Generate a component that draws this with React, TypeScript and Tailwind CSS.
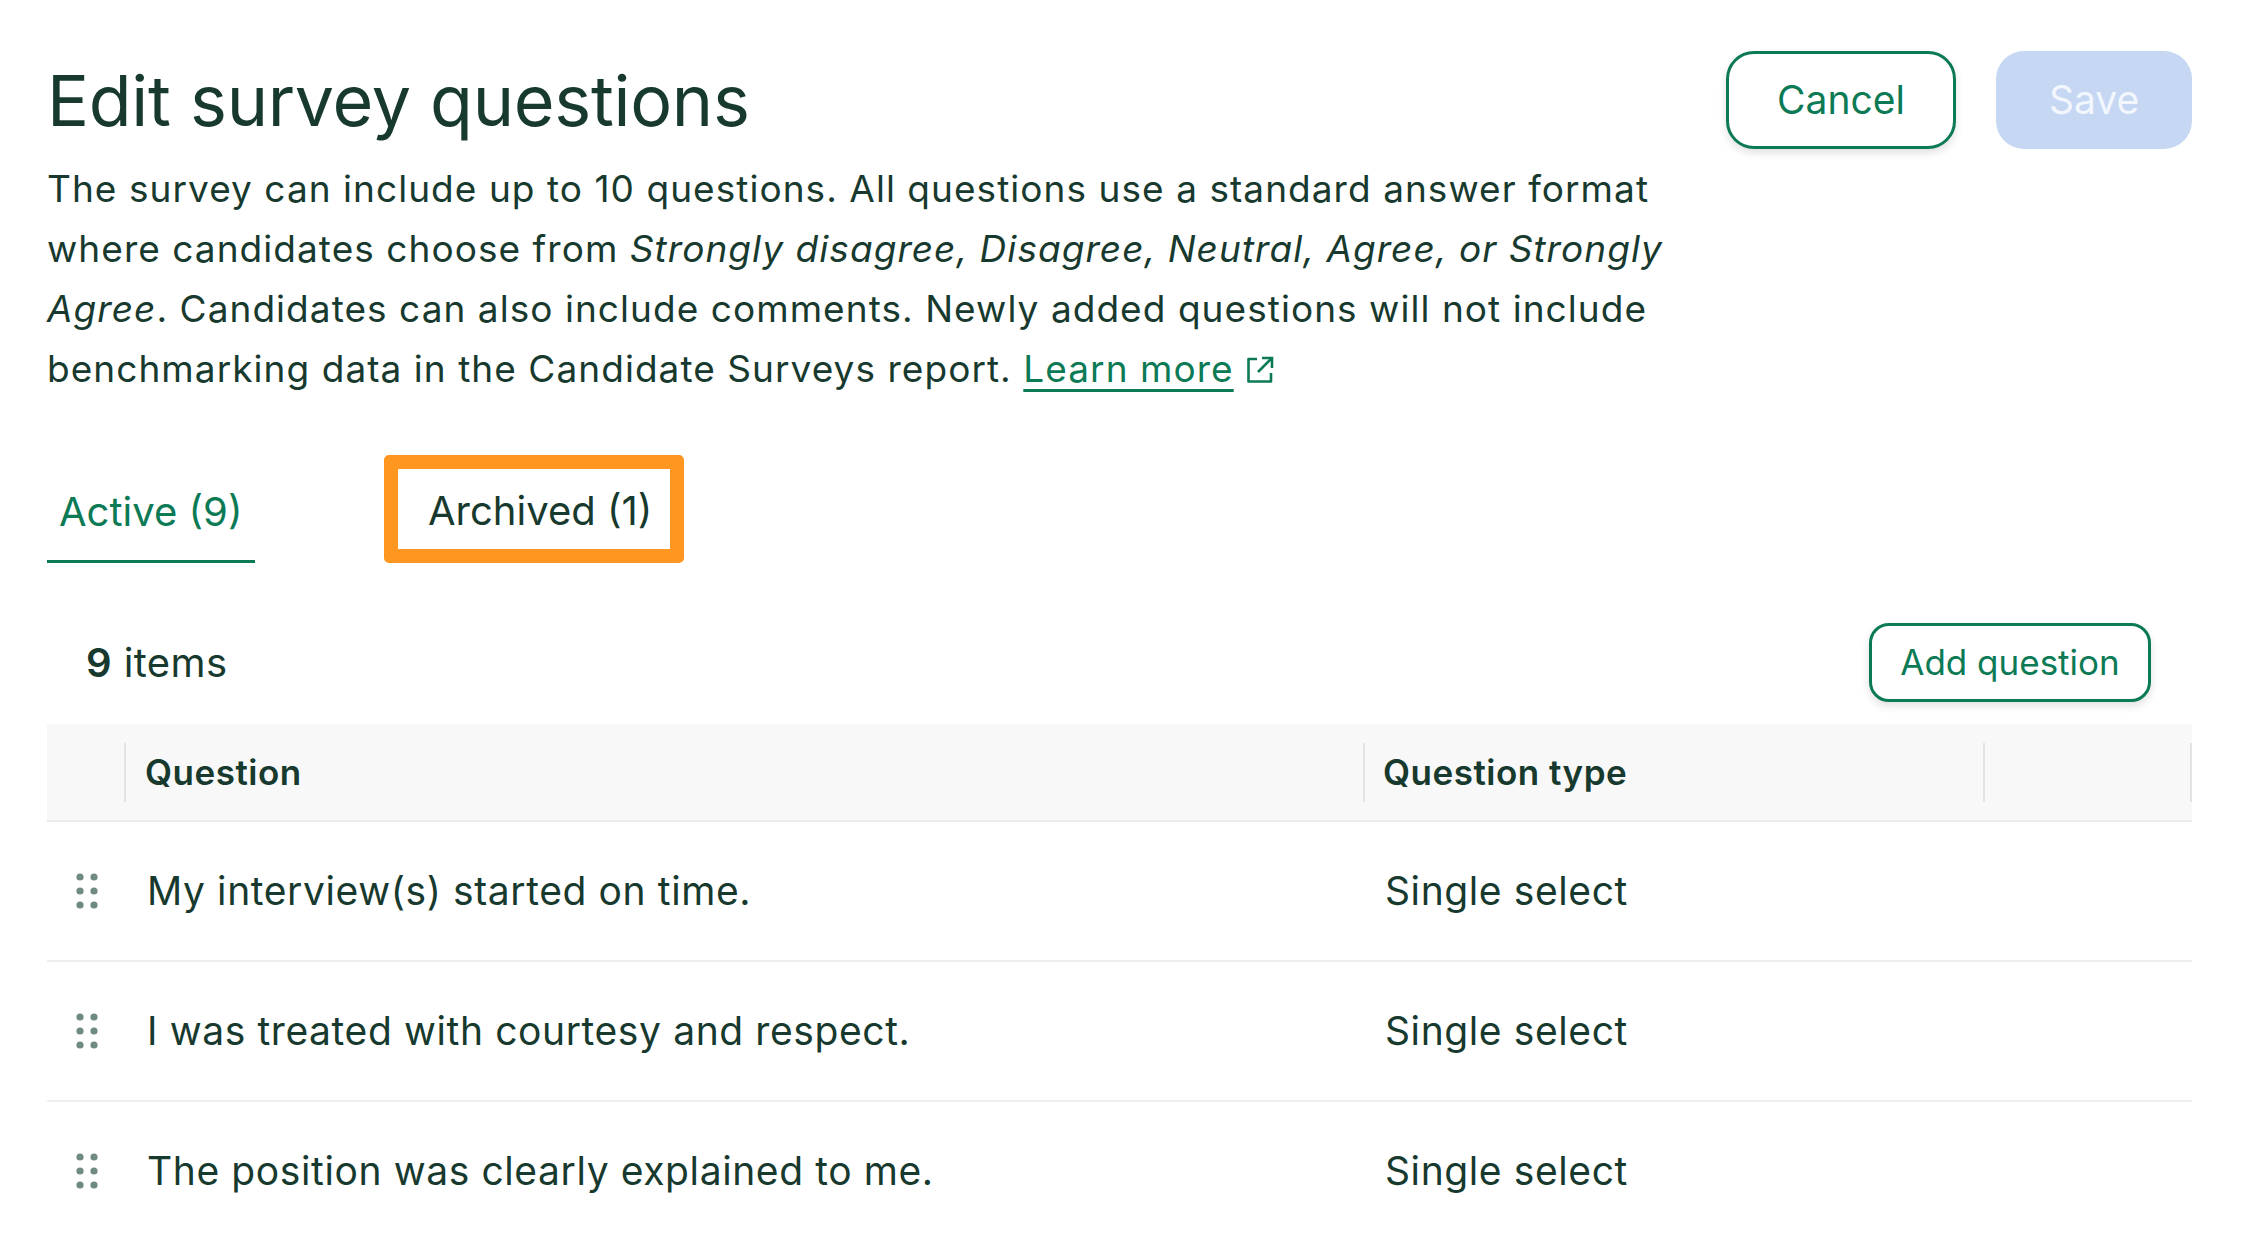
import React from "react";

const rows = [
  "My interview(s) started on time.",
  "I was treated with courtesy and respect.",
  "The position was clearly explained to me.",
];

function DragHandle() {
  return (
    <svg width="22" height="36" viewBox="0 0 22 36" className="block">
      {[0, 1, 2].map((r) =>
        [0, 1].map((c) => (
          <circle key={`${r}-${c}`} cx={4 + c * 14} cy={4 + r * 14} r="3.6" fill="#6f8a80" />
        ))
      )}
    </svg>
  );
}

function ExternalIcon() {
  return (
    <svg width="30" height="30" viewBox="0 0 30 30" fill="none" stroke="#0b7a55" strokeWidth="2.6" className="inline-block align-[-3px]">
      <path d="M12 4H3.5v22.5H26V18" strokeLinejoin="round" />
      <path d="M17 3h10v10" />
      <path d="M27 3L13 17" />
    </svg>
  );
}

function HeaderDivider() {
  return <div className="w-[2px] h-[59px] bg-[#e3e3e3]" />;
}

export default function App() {
  return (
    <div className="w-[2246px] h-[1234px] overflow-hidden bg-white font-['Inter',sans-serif] text-[#17392e]">
      <div className="pl-[47px] pr-[54px]">
        <div className="flex justify-between items-start">
          <div className="w-[1650px] shrink-0">
            <h1 className="mt-[58px] text-[70px] leading-[86px] font-normal tracking-[-0.3px]">Edit survey questions</h1>
            <p className="mt-[15px] text-[37px] leading-[60px] tracking-[1.05px]">
              The survey can include up to 10 questions. All questions use a standard answer format where candidates choose from{" "}
              <em>Strongly disagree, Disagree, Neutral, Agree, or Strongly Agree</em>. Candidates can also include comments. Newly added
              questions will not include benchmarking data in the Candidate Surveys report.{" "}
              <a className="text-[#0b7a55] underline decoration-[3px] underline-offset-[7px]">Learn more</a>{" "}
              <ExternalIcon />
            </p>
          </div>
          <div className="flex gap-[40px] mt-[51px] shrink-0">
            <button className="w-[230px] h-[98px] rounded-[28px] border-[3px] border-[#0b7a55] bg-white text-[#0b7a55] text-[39px] shadow-[0_4px_8px_rgba(0,0,0,0.12)]">
              Cancel
            </button>
            <button className="w-[196px] h-[98px] rounded-[28px] bg-[#c6d7f3] text-[#f2f6fd] text-[39px]">Save</button>
          </div>
        </div>

        <div className="mt-[60px] flex items-start">
          <div className="w-[208px] h-[104px] flex items-center pt-[4px] pl-[12px] border-b-[3px] border-[#0b7a55] text-[#0b7a55] text-[40px]">
            Active (9)
          </div>
          <div className="ml-[129px] mt-[-4px] w-[300px] h-[108px] rounded-[5px] border-[14px] border-[#ff961f] flex items-center pt-[4px] pl-[30px] text-[40px]">
            Archived (1)
          </div>
        </div>

        <div className="mt-[60px] flex items-center justify-between">
          <div className="pl-[39px] text-[40px] tracking-[0.4px]">
            <span className="font-semibold">9</span> items
          </div>
          <button className="mr-[41px] w-[282px] h-[79px] rounded-[20px] border-[3px] border-[#0b7a55] bg-white text-[#0b7a55] text-[35px] shadow-[0_4px_8px_rgba(0,0,0,0.12)]">
            Add question
          </button>
        </div>

        <div className="mt-[22px]">
          <div className="grid grid-cols-[79px_1239px_620px_207px] h-[98px] bg-[#f8f8f8] border-b-[2px] border-[#ececec] items-center">
            <div className="h-full flex items-center justify-end">
              <HeaderDivider />
            </div>
            <div className="h-full flex items-center justify-between">
              <span className="pl-[19px] text-[35px] font-semibold tracking-[0.5px]">Question</span>
              <HeaderDivider />
            </div>
            <div className="h-full flex items-center justify-between">
              <span className="pl-[18px] text-[35px] font-semibold tracking-[0.5px]">Question type</span>
              <HeaderDivider />
            </div>
            <div className="h-full flex items-center justify-end">
              <HeaderDivider />
            </div>
          </div>
          {rows.map((q, i) => (
            <div
              key={i}
              className="grid grid-cols-[79px_1239px_620px_207px] h-[140px] items-center border-b-[2px] border-[#efefef]"
            >
              <div className="pl-[29px]">
                <DragHandle />
              </div>
              <div className="pl-[21px] text-[39px] tracking-[0.6px]">{q}</div>
              <div className="pl-[20px] text-[39px] tracking-[0.6px]">Single select</div>
              <div />
            </div>
          ))}
        </div>
      </div>
    </div>
  );
}
